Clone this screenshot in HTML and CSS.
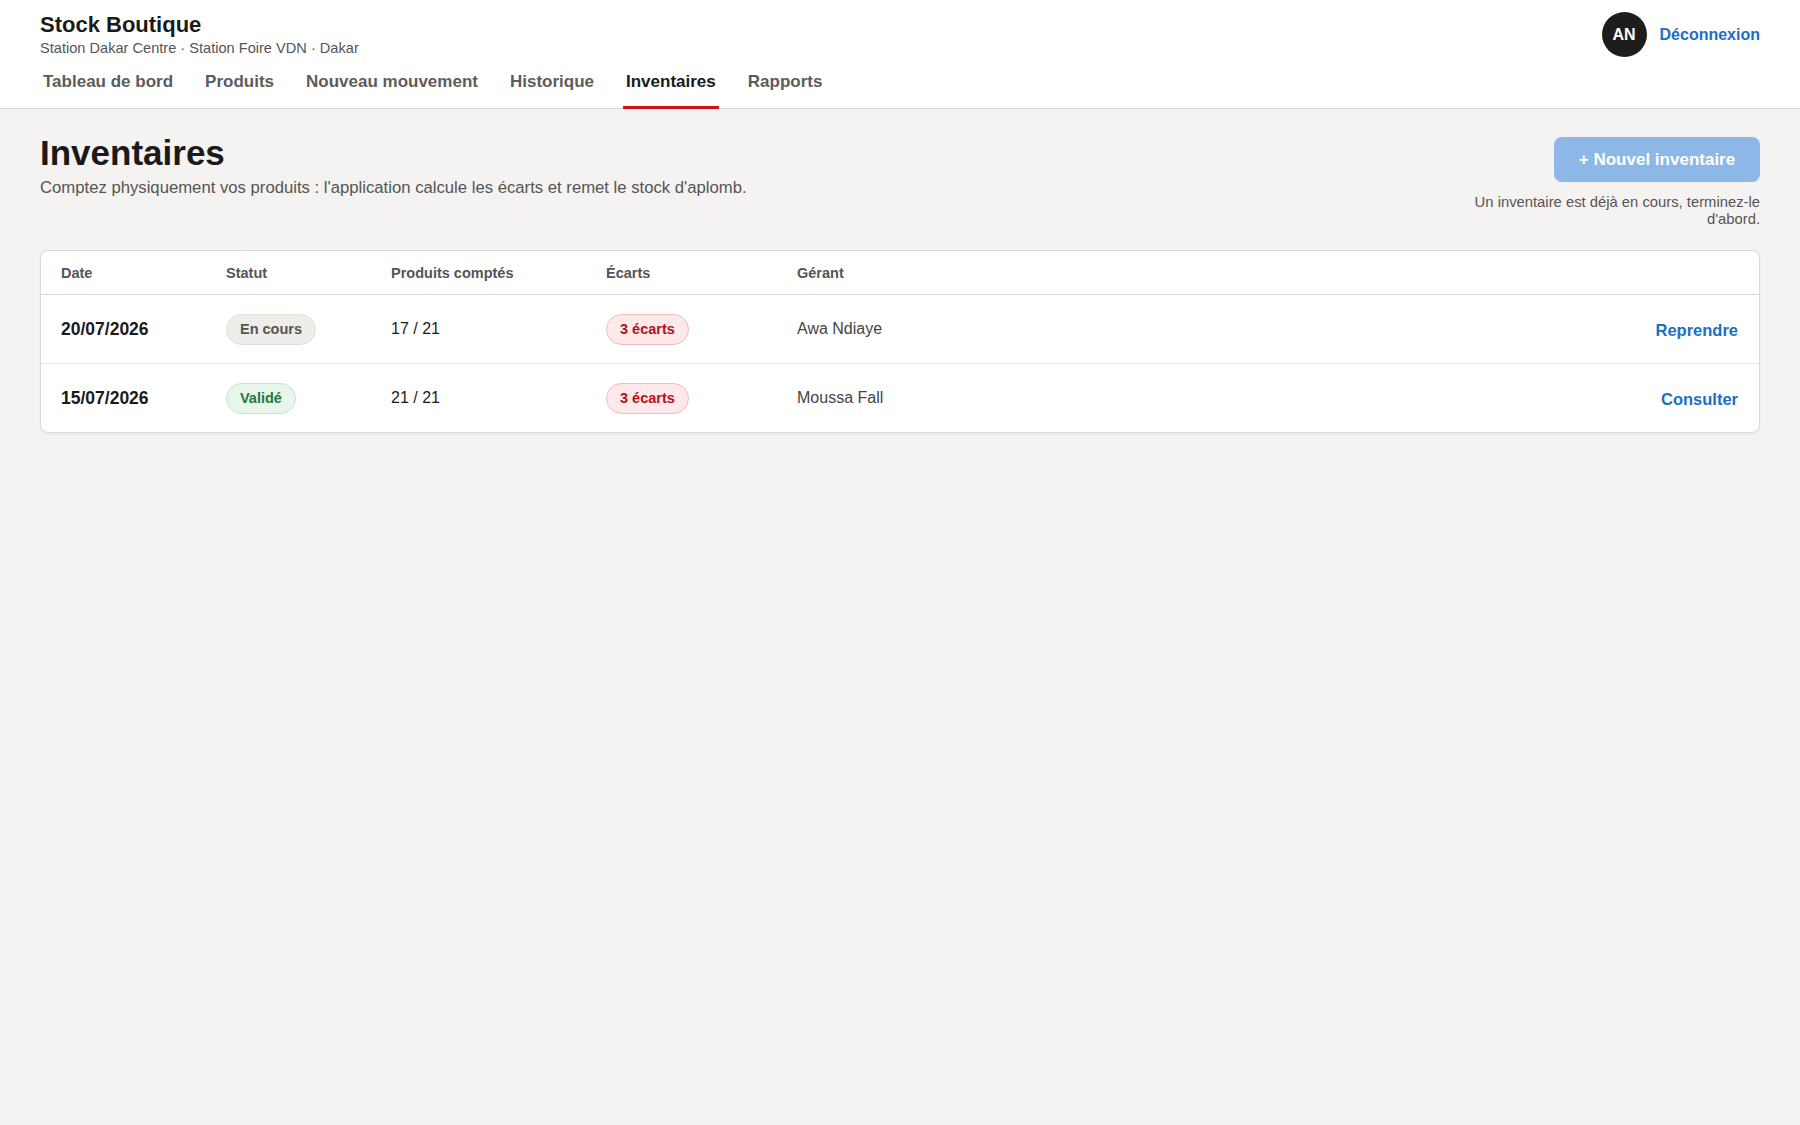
FILE: index.html
```html
<!DOCTYPE html>
<html lang="fr">
<head>
<meta charset="utf-8">
<title>Inventaires - Stock Boutique</title>
<link rel="stylesheet" href="styles.css">
</head>
<body>

  <header class="topbar">
    <div class="topbar-row">
      <div class="brand">
        <div class="brand-name">Stock Boutique</div>
        <div class="brand-sub">Station Dakar Centre · Station Foire VDN · Dakar</div>
      </div>
      <div class="user">
        <span class="avatar">AN</span>
        <a class="logout" href="#">Déconnexion</a>
      </div>
    </div>
    <nav class="tabs">
      <a href="#">Tableau de bord</a>
      <a href="#">Produits</a>
      <a href="#">Nouveau mouvement</a>
      <a href="#">Historique</a>
      <a href="#" class="active">Inventaires</a>
      <a href="#">Rapports</a>
    </nav>
  </header>

  <main class="page">
    <div class="page-head">
      <div>
        <h1>Inventaires</h1>
        <p class="lead">Comptez physiquement vos produits : l'application calcule les écarts et remet le stock d'aplomb.</p>
      </div>
      <div class="head-actions">
        <button class="btn-primary" disabled>+ Nouvel inventaire</button>
        <p class="hint">Un inventaire est déjà en cours, terminez-le d'abord.</p>
      </div>
    </div>

    <div class="card">
      <table class="list">
        <thead>
          <tr>
            <th class="c-date">Date</th>
            <th class="c-status">Statut</th>
            <th class="c-count">Produits comptés</th>
            <th class="c-gap">Écarts</th>
            <th>Gérant</th>
            <th></th>
          </tr>
        </thead>
        <tbody>
          <tr>
            <td class="date">20/07/2026</td>
            <td><span class="badge badge-grey">En cours</span></td>
            <td>17 / 21</td>
            <td><span class="badge badge-red">3 écarts</span></td>
            <td class="who">Awa Ndiaye</td>
            <td class="act"><a href="#">Reprendre</a></td>
          </tr>
          <tr>
            <td class="date">15/07/2026</td>
            <td><span class="badge badge-green">Validé</span></td>
            <td>21 / 21</td>
            <td><span class="badge badge-red">3 écarts</span></td>
            <td class="who">Moussa Fall</td>
            <td class="act"><a href="#">Consulter</a></td>
          </tr>
        </tbody>
      </table>
    </div>
  </main>

</body>
</html>
```

FILE: styles.css
```css
body {
  margin: 0;
  background: #f4f3f1;
  color: #1a1a1a;
  font-family: "Liberation Sans", Arial, sans-serif;
}

a {
  text-decoration: none;
}

/* header */
.topbar {
  background: #fff;
  border-bottom: 1px solid #d9d7d3;
  padding: 0 40px;
}
.topbar-row {
  display: flex;
  justify-content: space-between;
  align-items: flex-start;
  padding-top: 13px;
}
.brand-name {
  font-size: 22px;
  font-weight: bold;
  line-height: 24px;
}
.brand-sub {
  font-size: 14.6px;
  color: #555;
  line-height: 18px;
  margin-top: 2px;
}
.user {
  display: flex;
  align-items: center;
  gap: 13px;
  margin-top: -1px;
}
.avatar {
  width: 45px;
  height: 45px;
  border-radius: 50%;
  background: #1d1d1d;
  color: #fff;
  font-weight: bold;
  font-size: 16px;
  display: flex;
  align-items: center;
  justify-content: center;
}
.logout {
  color: #1b6ec2;
  font-weight: bold;
  font-size: 16px;
}

.tabs {
  display: flex;
  gap: 26px;
  margin-top: 15px;
}
.tabs a {
  padding: 0 3px 14px;
  margin-bottom: -1px;
  font-size: 17px;
  font-weight: bold;
  color: #5c5c5c;
  border-bottom: 3px solid transparent;
  line-height: 20px;
}
.tabs a.active {
  color: #1a1a1a;
  border-bottom-color: #d0121b;
}

/* page */
.page {
  padding: 19px 40px;
}
.page-head {
  display: flex;
  justify-content: space-between;
  align-items: flex-start;
  margin-bottom: 22px;
}
h1 {
  margin: 5px 0 0;
  font-size: 35px;
  line-height: 40px;
}
.lead {
  margin: 5px 0 0;
  font-size: 16.7px;
  color: #555;
}
.head-actions {
  display: flex;
  flex-direction: column;
  align-items: flex-end;
  margin-top: 9px;
}
.btn-primary {
  font-family: inherit;
  font-size: 17px;
  font-weight: bold;
  color: #fff;
  background: #8db7e6;
  border: 0;
  border-radius: 8px;
  width: 206px;
  height: 45px;
}
.hint {
  margin: 12px 0 0;
  max-width: 295px;
  text-align: right;
  font-size: 14.8px;
  line-height: 17px;
  color: #555;
}

/* table */
.card {
  background: #fff;
  border: 1px solid #dcdad6;
  border-radius: 8px;
  box-shadow: 0 1px 2px rgba(0, 0, 0, 0.05);
  overflow: hidden;
}
.list {
  width: 100%;
  border-collapse: collapse;
}
.list th {
  text-align: left;
  font-size: 14.5px;
  font-weight: bold;
  color: #555;
  height: 43px;
  padding: 0 0 0 20px;
  border-bottom: 1px solid #dcdad6;
}
.c-date { width: 145px; }
.c-status { width: 145px; }
.c-count { width: 195px; }
.c-gap { width: 171px; }
.list td {
  height: 68px;
  padding: 0 0 0 20px;
  font-size: 16px;
  border-bottom: 1px solid #ebe9e6;
}
.list tr:last-child td {
  border-bottom: 0;
}
.list td.date {
  font-weight: bold;
  font-size: 17.5px;
}
.list td.who {
  color: #444;
}
.list td.act {
  text-align: right;
  padding-right: 21px;
}
.act a {
  display: inline-block;
  margin-top: 3px;
  color: #1b6ec2;
  font-weight: bold;
  font-size: 16.5px;
}

.badge {
  display: inline-block;
  font-size: 14.5px;
  font-weight: bold;
  line-height: 29px;
  padding: 0 13px;
  border-radius: 16px;
  border: 1px solid;
}
.badge-grey {
  background: #efedea;
  border-color: #e0ddd8;
  color: #555;
}
.badge-green {
  background: #e7f5eb;
  border-color: #c4e5cd;
  color: #1e7a3c;
}
.badge-red {
  background: #fde9ea;
  border-color: #f4b9bc;
  color: #b3111c;
}
```
